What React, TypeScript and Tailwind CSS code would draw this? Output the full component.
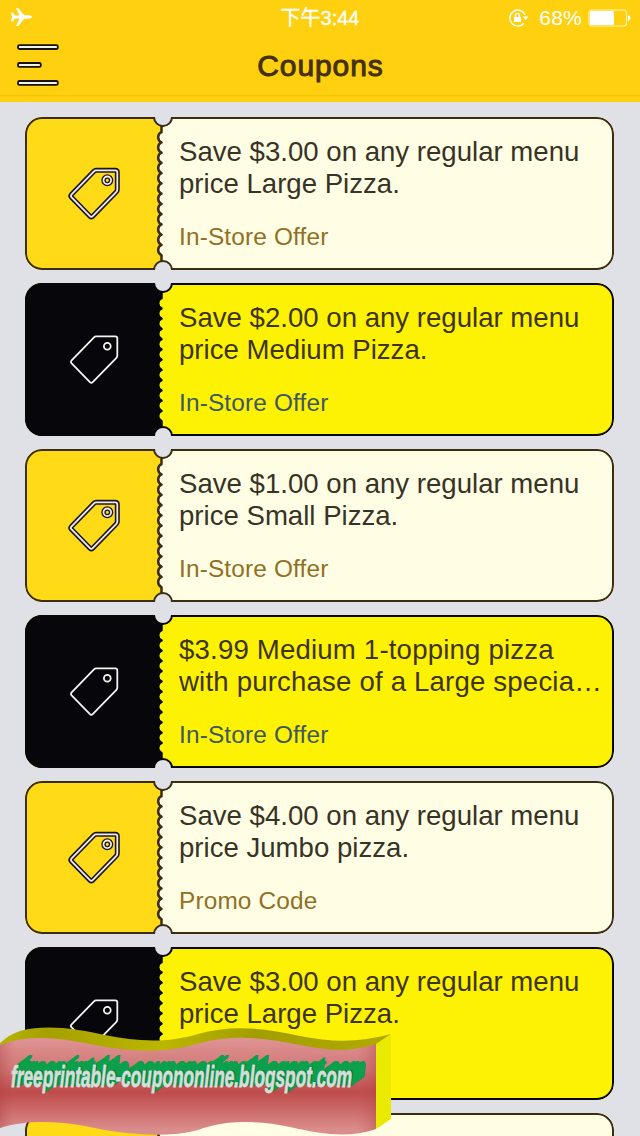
import clsx from "clsx";

interface Coupon {
  lines: [string, string];
  kind?: string;
  wide?: boolean;
}

const coupons: Coupon[] = [
  { lines: ["Save $3.00 on any regular menu", "price Large Pizza."], kind: "In-Store Offer" },
  { lines: ["Save $2.00 on any regular menu", "price Medium Pizza."], kind: "In-Store Offer" },
  { lines: ["Save $1.00 on any regular menu", "price Small Pizza."], kind: "In-Store Offer" },
  { lines: ["$3.99 Medium 1-topping pizza", "with purchase of a Large specia…"], kind: "In-Store Offer", wide: true },
  { lines: ["Save $4.00 on any regular menu", "price Jumbo pizza."], kind: "Promo Code" },
  { lines: ["Save $3.00 on any regular menu", "price Large Pizza."] },
  { lines: ["Save $2.00 on any regular menu", "price Medium Pizza."] },
];

// twelve bites down the tear line
const perforation = "V15.2" + "a5.6 5.6 0 0 0 0 10.25".repeat(12) + "V153";

const TagIcon = ({ dark }: { dark: boolean }) => {
  const tag = "M28 3.3H47.3Q49.3 3.3 49.3 5.3V22.5Q49.3 24 48.2 25.1L24.7 49.2Q23.3 50.6 21.9 49.2L3.4 30.2Q2.2 28.9 3.4 27.6L26 4.3Q27 3.3 28 3.3Z";
  return (
    <svg className="h-[54px] w-[53px]" viewBox="0 0 53 54" fill="none" strokeLinejoin="round">
      {!dark && (
        <g stroke="#1c1620">
          <path d={tag} strokeWidth="5" />
          <circle cx="39.3" cy="13.3" r="3.8" strokeWidth="4.4" />
        </g>
      )}
      <g stroke={dark ? "#f4f4f0" : "#f1ebe8"} strokeWidth="1.8">
        <path d={tag} />
        <circle cx="39.3" cy="13.3" r={dark ? 3.4 : 3.8} />
      </g>
    </svg>
  );
};

const Notch = ({ className, dark }: { className: string; dark: boolean }) => (
  <span
    className={clsx(
      "absolute left-[127.5px] size-5 rounded-full border-[2.5px] bg-[#e0e0e7]",
      dark ? "border-[#08070b]" : "border-[#3b2c12]",
      className
    )}
  />
);

const Ticket = ({ coupon, dark }: { coupon: Coupon; dark: boolean }) => (
  <li
    className={clsx(
      "relative flex h-[153px] shrink-0 overflow-hidden rounded-[17px]",
      dark ? "bg-[#fdf204]" : "bg-[#fffee4]"
    )}
  >
    <div
      className={clsx(
        "flex w-[130px] shrink-0 items-center justify-center pl-2",
        dark ? "bg-[#06060b]" : "bg-[#fedb16]"
      )}
    >
      <TagIcon dark={dark} />
    </div>
    <svg className="h-[153px] w-[10px] shrink-0" viewBox="0 0 10 153">
      <path d={`M0 0H6.5${perforation}H0Z`} fill={dark ? "#06060b" : "#fedb16"} />
      <path
        d={`M6.5 0${perforation}`}
        fill="none"
        stroke={dark ? "#06060b" : "#3b2c12"}
        strokeWidth="2.5"
        strokeLinejoin="round"
      />
    </svg>
    <div className="pt-[18.5px] pl-[14px] whitespace-nowrap">
      <p
        className={clsx(
          "text-[27.6px] leading-[32.5px]",
          coupon.wide && "tracking-[0.18px]",
          dark ? "text-[#3d341a]" : "text-[#373326]"
        )}
      >
        {coupon.lines[0]}
        <br />
        {coupon.lines[1]}
      </p>
      {coupon.kind && (
        <p className={clsx("mt-[22px] text-[24.4px] leading-7 tracking-[0.15px]", dark ? "text-[#3d5763]" : "text-[#917026]")}>
          {coupon.kind}
        </p>
      )}
    </div>
    <span
      className={clsx(
        "absolute inset-0 rounded-[17px] border-[2.5px]",
        dark ? "border-[#08070b]" : "border-[#3b2c12]"
      )}
    />
    <Notch className="-top-[10px]" dark={dark} />
    <Notch className="-bottom-[10px]" dark={dark} />
  </li>
);

const StatusBar = () => (
  <div className="grid h-9 grid-cols-3 items-center text-white">
    <svg className="mb-[2px] ml-[10px] h-5 w-[22px]" viewBox="0 0 22 20" fill="currentColor">
      <path d="M1 5.5H2.7L5 8.4H9.5L6 1H8.2L14.2 8.3H19Q22 8.8 22 10T19 11.7H14.2L8.2 19H6L9.5 11.6H5L2.7 14.5H1L2 10Z" />
    </svg>
    <span className="text-center text-[20px] whitespace-nowrap [-webkit-text-stroke:0.3px_white]">下午3:44</span>
    <div className="flex items-center justify-end pr-[9px]">
      <svg className="h-[18px] w-5" viewBox="0 0 20 18" fill="none" stroke="currentColor" strokeWidth="1.4">
        <path d="M16.2 6A8 8 0 1 0 15 14.2" />
        <path d="M13.7 7.5H19.5L16.6 11Z" fill="currentColor" stroke="none" />
        <rect x="5" y="8" width="7" height="5" fill="currentColor" stroke="none" />
        <path d="M6.6 8V6.3A1.9 1.9 0 0 1 10.4 6.3V8" />
      </svg>
      <span className="ml-[10px] text-[21px] tracking-[0.2px]">68%</span>
      <svg className="ml-[6px] h-[18px] w-[43px]" viewBox="0 0 43 18" fill="none">
        <rect x="1" y="1" width="37.5" height="16" rx="3" stroke="#fff3b0" strokeWidth="1.2" />
        <rect x="2" y="2" width="24" height="14" rx="1.5" fill="white" />
        <path d="M40 6Q42.5 7 42.5 9T40 12Z" fill="white" />
      </svg>
    </div>
  </div>
);

const MenuButton = () => (
  <svg className="h-[43px] w-[42px]" viewBox="0 0 42 43" fill="#f3f3ee" stroke="#17120c" strokeWidth="1.8">
    <rect x="1" y="1.2" width="39.8" height="3.8" rx="1.4" />
    <rect x="1" y="19" width="22.8" height="3.8" rx="1.4" />
    <rect x="1" y="37" width="39.8" height="3.8" rx="1.4" />
  </svg>
);

// stacked shadows make the extruded side of the lettering
const extrusion = Array.from({ length: 28 }, (_, i) => {
  const n = (i + 1) / 28;
  return `${(n * 24).toFixed(1)}px ${(-n * 10).toFixed(1)}px 0 ${i < 3 ? "#0a7d3a" : "#0c9f4c"}`;
}).join(",");

const Ribbon = () => (
  <div className="absolute bottom-0 left-0 h-[110px] w-[392px]">
    <svg className="absolute inset-0" width="392" height="110" viewBox="0 0 392 110">
      <defs>
        <linearGradient id="ribbon" x1="0" y1="0" x2="0" y2="1">
          <stop offset="0" stopColor="#df9494" />
          <stop offset="0.33" stopColor="#d17676" />
          <stop offset="0.56" stopColor="#bf4b4b" />
          <stop offset="0.95" stopColor="#db8d8d" />
        </linearGradient>
        <linearGradient id="fold" x1="0" y1="0" x2="1" y2="0">
          <stop offset="0" stopColor="#b8b400" />
          <stop offset="0.12" stopColor="#a6a000" />
          <stop offset="0.42" stopColor="#bbb600" />
          <stop offset="0.65" stopColor="#a39e00" />
          <stop offset="1" stopColor="#b0aa00" />
        </linearGradient>
        <linearGradient id="edges">
          <stop offset="0" stopColor="#a83d3d" stopOpacity="0.35" />
          <stop offset="0.04" stopColor="#c45757" stopOpacity="0" />
          <stop offset="0.95" stopColor="#c45757" stopOpacity="0" />
          <stop offset="1" stopColor="#a83d3d" stopOpacity="0.35" />
        </linearGradient>
      </defs>
      <path d="M0 17Q10 8 20 5C48 -2 75 3 105 9C135 15 165 18 198 8C228 -1 262 1 300 10C335 17 360 16 391 8L376 20V30H0Z" fill="url(#fold)" />
      <path d="M376 18L391 8V93L376 103Z" fill="#eaea00" />
      {["url(#ribbon)", "url(#edges)"].map((fill) => (
        <path
          key={fill}
          d="M0 19C30 8 60 12 90 18C130 26 165 28 200 17C235 8 265 12 300 19C330 25 350 26 376 18V103C350 112 325 109 290 101C255 94 225 94 198 104C165 113 120 108 85 100C55 95 25 94 0 102Z"
          fill={fill}
        />
      ))}
    </svg>
    <span
      className="absolute top-[33px] left-[11px] origin-left scale-x-[0.575] text-[30px] leading-[36px] font-bold whitespace-nowrap text-[#d5dfda] italic [-webkit-text-stroke:0.8px_#d5dfda]"
      style={{ textShadow: extrusion }}
    >
      freeprintable-coupononline.blogspot.com
    </span>
  </div>
);

export default function App() {
  return (
    <div className="relative h-[1136px] w-[640px] overflow-hidden bg-[#e0e0e7] font-['Liberation_Sans','Noto_Sans_CJK_SC',sans-serif]">
      <header className="h-[102px] bg-[#fed00f]">
        <StatusBar />
        <div className="grid h-[60px] grid-cols-[1fr_auto_1fr] items-center border-b border-[#f1c408] pl-[17px]">
          <MenuButton />
          <h1 className="pr-4 text-[30px] leading-none tracking-[0.9px] text-[#46300b] [-webkit-text-stroke:1px_#46300b]">
            Coupons
          </h1>
        </div>
      </header>
      <ul className="flex flex-col gap-[13px] pt-[15px] pr-[26px] pl-[25px]">
        {coupons.map((coupon, i) => (
          <Ticket key={i} coupon={coupon} dark={i % 2 === 1} />
        ))}
      </ul>
      <Ribbon />
    </div>
  );
}
